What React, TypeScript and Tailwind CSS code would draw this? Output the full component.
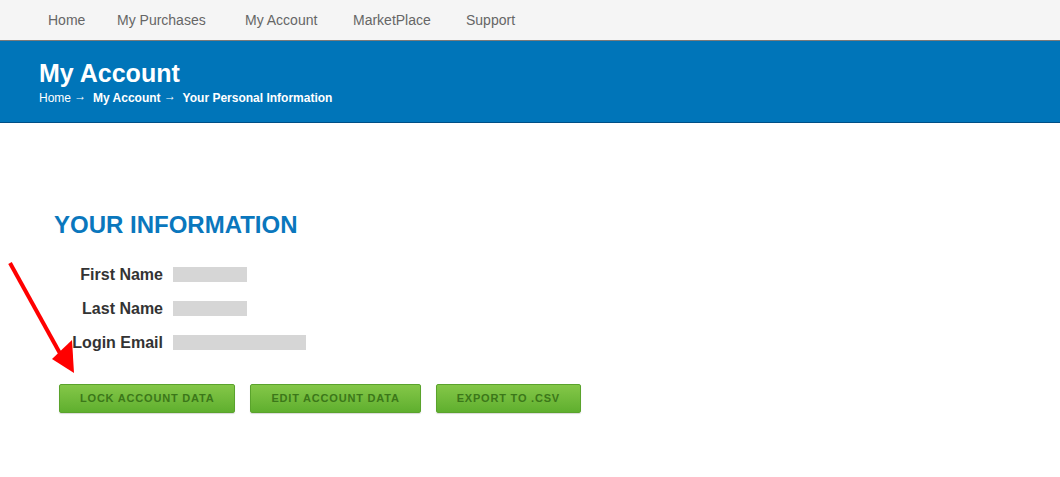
import React from "react";

const navItems = [
  { label: "Home", width: "w-[69px]" },
  { label: "My Purchases", width: "w-[128px]" },
  { label: "My Account", width: "w-[108px]" },
  { label: "MarketPlace", width: "w-[113px]" },
  { label: "Support", width: "w-auto" },
];

const fields = [
  { label: "First Name", width: "w-[74px]" },
  { label: "Last Name", width: "w-[74px]" },
  { label: "Login Email", width: "w-[133px]" },
];

const buttons = ["Lock Account Data", "Edit Account Data", "Export to .csv"];

function Arrow() {
  return <span className="align-[2px]">&rarr;</span>;
}

export default function App() {
  return (
    <div className="relative min-h-[477px] bg-white font-['Liberation_Sans',Arial,sans-serif]">
      {/* top nav */}
      <div className="flex h-[41px] items-center border-b border-[#7a7a7a] bg-[#f5f5f5] pl-[48px] text-[14px] text-[#666]">
        {navItems.map((item) => (
          <span key={item.label} className={item.width}>
            {item.label}
          </span>
        ))}
      </div>

      {/* blue title band */}
      <div className="h-[82px] border-b border-[#004f86] bg-[#0075b9] pl-[39px] pt-[17px] text-white">
        <h1 className="text-[25px] leading-[30px] font-bold">My Account</h1>
        <div className="mt-[1px] text-[12px] leading-[14px]">
          Home <Arrow />&nbsp; <span className="font-bold">My Account</span> <Arrow />&nbsp;{" "}
          <span className="font-bold">Your Personal Information</span>
        </div>
      </div>

      {/* info section */}
      <div className="pl-[54px] pt-[88px]">
        <h2 className="text-[24px] leading-[28px] font-bold text-[#0a77bd]">YOUR INFORMATION</h2>
        <div className="mt-[28px] flex flex-col gap-[19px]">
          {fields.map((f) => (
            <div key={f.label} className="flex items-center">
              <div className="w-[109px] text-right text-[16px] leading-[15px] font-bold text-[#333]">{f.label}</div>
              <div className={`ml-[10px] h-[15px] ${f.width} bg-[#d6d6d6]`} />
            </div>
          ))}
        </div>
        <div className="ml-[5px] mt-[34px] flex gap-[15px]">
          {buttons.map((b) => (
            <button
              key={b}
              className="h-[29px] rounded-[2px] border border-[#5aa32c] bg-gradient-to-b from-[#84c748] to-[#5faf2e] px-[20px] text-[11px] font-bold uppercase tracking-[0.8px] text-[#3b7719] shadow-[0_1px_1px_rgba(0,0,0,0.15)]"
            >
              {b}
            </button>
          ))}
        </div>
      </div>

      {/* red annotation arrow */}
      <svg className="pointer-events-none absolute left-0 top-0" width="100" height="400" viewBox="0 0 100 400">
        <line x1="10" y1="263" x2="62" y2="357" stroke="#ff0000" strokeWidth="4" />
        <polygon points="52,359 72,340 74,373" fill="#ff0000" />
      </svg>
    </div>
  );
}
